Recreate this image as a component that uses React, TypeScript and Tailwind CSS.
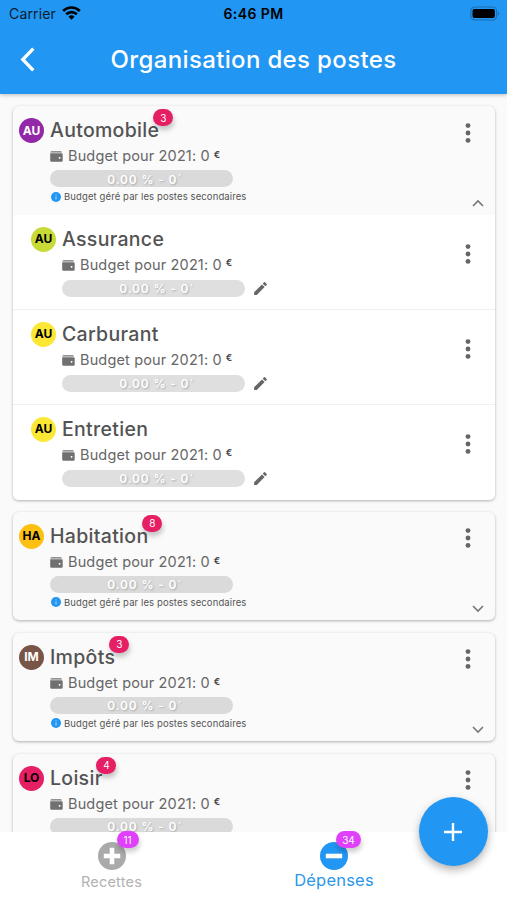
import React, { useState } from 'react';
import { MdEdit } from 'react-icons/md';

interface Poste {
  id: string;
  label: string;
  initials: string;
  color: string;
  count?: number;
  children?: Poste[];
}

const postes: Poste[] = [
  {
    id: 'auto',
    label: 'Automobile',
    initials: 'AU',
    color: 'bg-[#9227a8] text-white',
    count: 3,
    children: [
      { id: 'assurance', label: 'Assurance', initials: 'AU', color: 'bg-[#c8da36] text-black' },
      { id: 'carburant', label: 'Carburant', initials: 'AU', color: 'bg-[#fbe834] text-black' },
      { id: 'entretien', label: 'Entretien', initials: 'AU', color: 'bg-[#fbe834] text-black' }
    ]
  },
  { id: 'habitation', label: 'Habitation', initials: 'HA', color: 'bg-[#fdbf10] text-black', count: 8 },
  { id: 'impots', label: 'Impôts', initials: 'IM', color: 'bg-[#795548] text-white', count: 3 },
  { id: 'loisir', label: 'Loisir', initials: 'LO', color: 'bg-[#e61e63] text-black', count: 4 }
];

const StatusBar = () => (
  <div className="relative flex h-[28px] items-center justify-between pl-[9px] pr-[7px] text-[#0a1c2c]">
    <div className="flex items-center gap-[6px]">
      <span className="text-[14px] leading-none tracking-[0.15px]">Carrier</span>
      <svg className="-mt-[3px]" width="19" height="14" viewBox="0 0 19 14" fill="none" stroke="#000" strokeWidth="2.7">
        <path d="M1.2 5a11.6 11.6 0 0 1 16.6 0" />
        <path d="M4.2 8.3a7.5 7.5 0 0 1 10.6 0" />
        <path d="M9.5 13.7 6.5 10.7a4.3 4.3 0 0 1 6 0z" fill="#000" stroke="none" />
      </svg>
    </div>
    <span className="absolute left-1/2 -translate-x-1/2 text-[14px] font-semibold leading-none tracking-[0.4px] text-black">6:46 PM</span>
    <svg className="-mt-[2px]" width="30" height="15" viewBox="0 0 30 15">
      <rect x="0.8" y="1" width="25.8" height="13" rx="4" fill="none" stroke="#1c6fb2" strokeWidth="1.2" />
      <rect x="2.5" y="2.9" width="22.4" height="9.2" rx="2" fill="#000" />
      <path d="M28 5.5v4c1.6-.5 1.6-3.5 0-4z" fill="#1c6fb2" />
    </svg>
  </div>
);

const WalletIcon = () => (
  <svg width="13" height="11" viewBox="0 0 13 11" fill="#707070">
    <path d="M0.4 1.6Q0.4 0.3 1.7 0.3H10.6Q11.9 0.3 11.9 1.5H0.4z" />
    <path fillRule="evenodd" d="M0.2 2.3H11.4Q12.7 2.3 12.7 3.6V9.4Q12.7 10.7 11.4 10.7H1.5Q0.2 10.7 0.2 9.4zM9.6 6a.9.9 0 1 0 .01 0z" />
  </svg>
);

const Gauge = ({ parent }: { parent: boolean }) => (
  <div className={`flex h-[17px] w-[183px] items-center justify-center rounded-full pl-[6px] pt-[2px] ${parent ? 'bg-[#dadada]' : 'bg-[#dfdfdf]'}`}>
    <span className="flex items-center whitespace-nowrap text-[12px] font-semibold leading-none tracking-[0.85px] text-white [text-shadow:1px_1px_2px_#aaa]">
      0.00 % - 0<span className="mb-[5px] ml-px text-[8px] leading-none">'</span>
    </span>
  </div>
);

const MoreButton = () => (
  <button type="button" aria-label="Options" className="shrink-0">
    <svg width="6" height="20" viewBox="0 0 6 20" fill="#666">
      <circle cx="3" cy="2.6" r="2.45" />
      <circle cx="3" cy="10" r="2.45" />
      <circle cx="3" cy="17.4" r="2.45" />
    </svg>
  </button>
);

const PosteRow = ({ poste, parent = false }: { poste: Poste; parent?: boolean }) => (
  <div className="flex items-start">
    <div className={`mt-[12px] flex h-[25px] w-[25px] shrink-0 items-center justify-center rounded-full text-[12px] font-bold leading-none ${poste.color}`}>
      {poste.initials}
    </div>
    <div className="ml-[6px] pt-[12px]">
      <div className="relative w-fit">
        <h2 className="text-[19.5px] font-medium leading-[25px] tracking-[0.3px] text-[#535353]">{poste.label}</h2>
        {poste.count !== undefined && (
          <span className="absolute -right-[14px] -top-[9px] flex h-[17px] w-[20px] items-center justify-center rounded-full bg-[#e61e63] text-[10px] leading-none text-white shadow-[1px_4px_5px_rgba(0,0,0,0.22)]">
            {poste.count}
          </span>
        )}
      </div>
      <div className="mt-[4px] flex h-[19px] items-center">
        <WalletIcon />
        <span className="ml-[5px] whitespace-nowrap text-[14.5px] leading-none tracking-[0.15px] text-[#666]">Budget pour 2021: 0</span>
        <span className="mb-[4px] ml-[4px] text-[9.5px] font-semibold leading-none text-[#444]">€</span>
      </div>
      <div className={`flex items-center gap-[7px] ${parent ? 'mt-[4px]' : 'mt-[5px]'}`}>
        <Gauge parent={parent} />
        {!parent && <MdEdit className="-my-px h-[17px] w-[17px] text-[#666]" />}
      </div>
      {parent && (
        <div className="mt-[3px] flex h-[13px] items-center gap-[3px]">
          <svg className="ml-px" width="10" height="10" viewBox="0 0 10 10">
            <circle cx="5" cy="5" r="5" fill="#2196f3" />
            <path d="M5 4.4v3M5 2.3v1" stroke="#c8e4fb" strokeWidth="0.9" />
          </svg>
          <span className="whitespace-nowrap text-[9.5px] leading-none tracking-[0.11px] text-[#555]">Budget géré par les postes secondaires</span>
        </div>
      )}
    </div>
  </div>
);

const PosteCard = ({ poste }: { poste: Poste }) => {
  const [open, setOpen] = useState(poste.children !== undefined);

  return (
    <section className="rounded-[6px] bg-[#fafafa] shadow-[0_1px_3px_rgba(0,0,0,0.3)]">
      <div className="flex h-[108.5px] justify-between pl-[6px]">
        <PosteRow poste={poste} parent />
        <div className="flex w-[36px] flex-col justify-between pb-[7px] pl-[6px] pt-[16.5px]">
          <MoreButton />
          <button type="button" aria-label="Déplier" onClick={() => setOpen(!open)} className="ml-[6.5px]">
            <svg className={open ? 'rotate-180' : ''} width="12" height="9" viewBox="0 0 12 9" fill="none" stroke="#777" strokeWidth="1.6">
              <path d="M1 2l5 5 5-5" />
            </svg>
          </button>
        </div>
      </div>
      {open && poste.children?.map((child) => (
        <div key={child.id} className="flex h-[95px] items-start justify-between border-b border-[#f0f0f0] bg-white pl-[18px] pr-[24px] last:rounded-b-[6px] last:border-0">
          <PosteRow poste={child} />
          <div className="flex pt-[29px]">
            <MoreButton />
          </div>
        </div>
      ))}
    </section>
  );
};

const TabBadge = ({ value, className }: { value: number; className: string }) => (
  <span className={`absolute flex h-[17px] items-center justify-center rounded-full bg-[#e040fb] text-[10px] leading-none text-white shadow-[1px_4px_5px_rgba(0,0,0,0.2)] ${className}`}>
    {value}
  </span>
);

const App: React.FC = () => {
  return (
    <div className="relative flex h-[900px] w-[507px] flex-col overflow-hidden bg-[#fafafa] font-['Inter',sans-serif]">
      <header className="z-10 h-[94px] shrink-0 bg-[#2196f3] shadow-[0_1px_4px_rgba(0,0,0,0.25)]">
        <StatusBar />
        <div className="grid h-[64px] grid-cols-[60px_1fr_60px] items-center">
          <button type="button" aria-label="Retour" className="pb-px pl-[20px]">
            <svg width="15" height="25" viewBox="0 0 15 25" fill="none" stroke="#fff" strokeWidth="3.3">
              <path d="M13.3 1.6 2.8 12.5l10.5 10.9" />
            </svg>
          </button>
          <h1 className="text-center text-[24px] font-medium leading-none tracking-[0.35px] text-white">Organisation des postes</h1>
        </div>
      </header>

      <main className="flex min-h-0 flex-1 flex-col gap-[12.4px] overflow-hidden pl-[13px] pr-[12px] pt-[12px] *:shrink-0">
        {postes.map((poste) => (
          <PosteCard key={poste.id} poste={poste} />
        ))}
      </main>

      <nav className="z-10 flex h-[68px] shrink-0 bg-white pr-[62px]">
        <button type="button" className="flex w-[223px] flex-col items-center pt-[10px] text-[#b2b2b2]">
          <span className="relative">
            <svg width="28" height="28" viewBox="0 0 28 28">
              <circle cx="14" cy="14" r="14" fill="#aaa" />
              <path d="M14 5.8v16.4M5.8 14h16.4" stroke="#fff" strokeWidth="4.6" />
            </svg>
            <TabBadge value={11} className="-right-[13px] -top-[11px] w-[22px]" />
          </span>
          <span className="mt-[5px] text-[14.5px] leading-none tracking-[0.2px]">Recettes</span>
        </button>
        <button type="button" className="flex w-[222px] flex-col items-center pt-[10px] text-[#2b97ea]">
          <span className="relative">
            <svg width="28" height="28" viewBox="0 0 28 28">
              <circle cx="14" cy="14" r="14" fill="#2196f3" />
              <path d="M5.8 14h16.4" stroke="#fff" strokeWidth="4.6" />
            </svg>
            <TabBadge value={34} className="-right-[13px] -top-[11px] w-[25px]" />
          </span>
          <span className="mt-[2px] text-[16.5px] leading-none tracking-[0.2px]">Dépenses</span>
        </button>
      </nav>

      <button
        type="button"
        aria-label="Ajouter"
        className="absolute bottom-[34px] right-[19px] z-20 flex h-[69px] w-[69px] items-center justify-center rounded-full bg-[#2196f3] pr-px shadow-[0_4px_8px_rgba(0,0,0,0.3)]"
      >
        <svg width="18" height="18" viewBox="0 0 18 18" stroke="#fff" strokeWidth="2.4">
          <path d="M9 0v18M0 9h18" />
        </svg>
      </button>
    </div>
  );
};

export default App;
